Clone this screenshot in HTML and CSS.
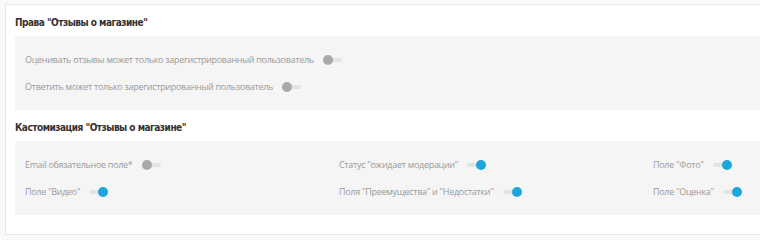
FILE: index.html
```html
<!DOCTYPE html>
<html lang="ru">
<head>
  <meta charset="UTF-8">
  <title>Отзывы о магазине</title>
  <link rel="stylesheet" href="styles.css">
</head>
<body>
  <div class="card">
    <h3>Права "Отзывы о магазине"</h3>
    <div class="panel">
      <div class="row">
        <span class="label">Оценивать отзывы может только зарегистрированный пользователь</span>
        <span class="toggle"></span>
      </div>
      <div class="row">
        <span class="label">Ответить может только зарегистрированный пользователь</span>
        <span class="toggle"></span>
      </div>
    </div>

    <h3>Кастомизация "Отзывы о магазине"</h3>
    <div class="panel grid">
      <div class="row">
        <span class="label">Email обязательное поле*</span>
        <span class="toggle"></span>
      </div>
      <div class="row">
        <span class="label">Статус "ожидает модерации"</span>
        <span class="toggle on"></span>
      </div>
      <div class="row">
        <span class="label">Поле "Фото"</span>
        <span class="toggle on"></span>
      </div>
      <div class="row">
        <span class="label">Поле "Видео"</span>
        <span class="toggle on"></span>
      </div>
      <div class="row">
        <span class="label">Поля "Преемущества" и "Недостатки"</span>
        <span class="toggle on"></span>
      </div>
      <div class="row">
        <span class="label">Поле "Оценка"</span>
        <span class="toggle on"></span>
      </div>
    </div>
  </div>
</body>
</html>
```

FILE: styles.css
```css
body {
  margin: 0;
  padding: 4px 0 0 5px;
  background-color: #f9f9f9;
  font-family: "Open Sans", Arial, sans-serif;
  overflow: hidden;
}

.card {
  width: 1000px;
  background: #fff;
  border: 1px solid #e9e9e9;
  padding: 0 9px 19px;
}

h3 {
  margin: 0;
  padding: 12px 0 7px;
  line-height: 12px;
  font-family: "DejaVu Sans Condensed", "Open Sans", sans-serif;
  font-size: 10px;
  font-weight: bold;
  letter-spacing: -0.5px;
  color: #333;
}

.panel {
  background: #f5f5f5;
  padding: 10px;
}

.grid {
  display: grid;
  grid-template-columns: repeat(3, 314px);
}

.row {
  display: flex;
  align-items: center;
  gap: 9px;
  height: 27px;
}

.label {
  font-size: 9px;
  letter-spacing: -0.3px;
  color: #9a9a9a;
}

.toggle {
  position: relative;
  width: 19px;
  height: 4px;
  border-radius: 2px;
  background: #e3e3e3;
}

.toggle::after {
  content: "";
  position: absolute;
  left: 0;
  top: -3px;
  width: 10px;
  height: 10px;
  border-radius: 50%;
  background: #a9a9a9;
}

.toggle.on::after {
  left: auto;
  right: 0;
  background: #1ba6dc;
}
```
